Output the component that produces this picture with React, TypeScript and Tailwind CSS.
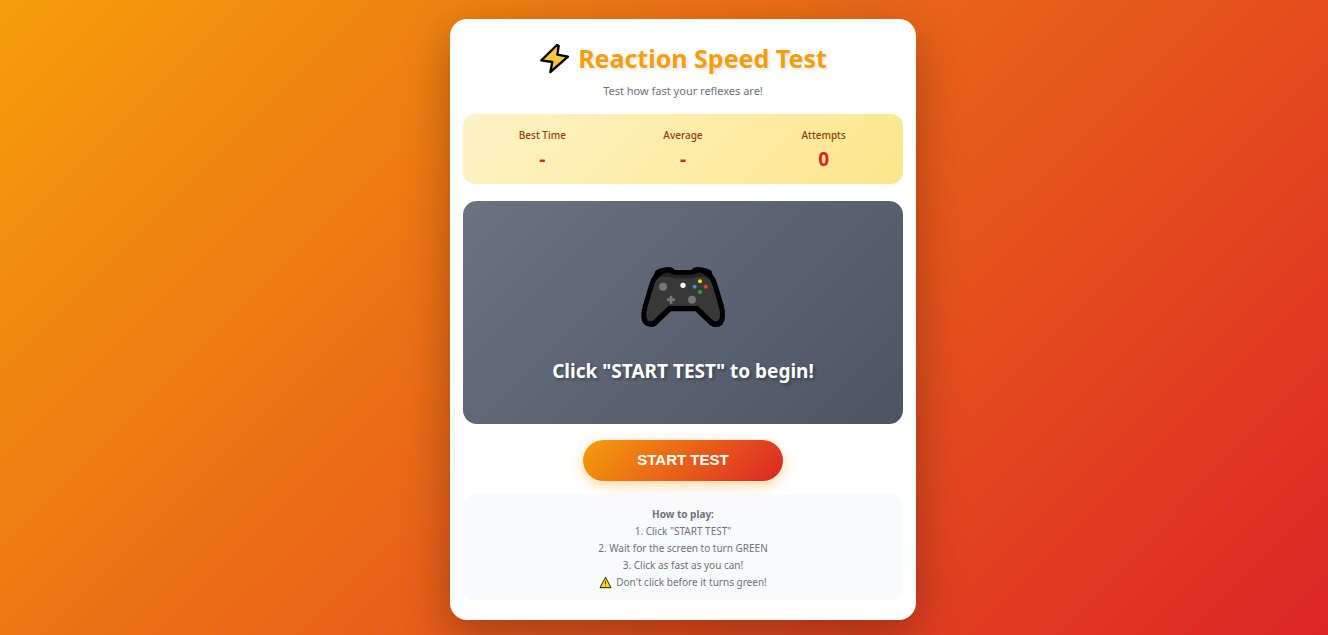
import React, { useEffect, useRef, useState } from "react";

type Phase = "idle" | "waiting" | "ready" | "done" | "early";

function BoltIcon() {
  return (
    <svg viewBox="0 0 93 93" className="h-[31px] w-[31px] shrink-0" aria-hidden="true">
      <path
        d="M54 6 L7 52 L40 57 L34 87 L87 41 L55 35 L59 9 Z"
        fill="#fcc63c"
        stroke="#000"
        strokeWidth="7"
        strokeLinejoin="round"
      />
    </svg>
  );
}

function GamepadIcon() {
  return (
    <svg viewBox="30 30 258 192" className="h-16 w-[86px]" aria-hidden="true">
      <path
        d="M76 47 Q95 36 118 36 Q128 36 135 45 L184 45 Q190 36 202 36 Q224 36 244 47 L247 57 Q257 69 263 90 L281 150 Q286 169 285 186 Q283 216 257 216 Q244 216 235 206 L196 169 L123 169 L84 206 Q75 216 62 216 Q35 214 34 186 Q33 169 39 150 L57 90 Q63 69 73 57 Z"
        fill="#000"
      />
      <path
        d="M88 65 Q100 52 118 52 L130 58 L188 58 L202 52 Q220 52 232 65 Q244 72 250 94 L267 152 Q274 172 271 188 Q267 200 257 201 Q251 201 246 195 L203 154 L116 154 L73 195 Q68 201 62 201 Q51 200 48 188 Q45 172 52 152 L69 94 Q75 72 88 65 Z"
        fill="#383838"
        stroke="#000"
        strokeWidth="3"
      />
      <path
        d="M89 66 Q100 54 118 54 L130 60 L188 60 L202 54 Q219 54 231 66 L202 66 L188 70 L130 70 L118 66 Z"
        fill="#242424"
      />
      <circle cx="99" cy="95" r="12" fill="#767676" />
      <circle cx="186" cy="134" r="12" fill="#767676" />
      <path d="M119 122h8v8h8v8h-8v8h-8v-8h-8v-8h8z" fill="#767676" />
      <circle cx="159" cy="91" r="8" fill="#fff" />
      <circle cx="210" cy="79" r="6" fill="#fde300" />
      <circle cx="194" cy="95" r="6" fill="#3a96dd" />
      <circle cx="227" cy="95" r="6" fill="#e74228" />
      <circle cx="210" cy="111" r="6" fill="#16b616" />
    </svg>
  );
}

function WarningIcon() {
  return (
    <svg viewBox="0 0 39 39" className="h-[13px] w-[13px] shrink-0" aria-hidden="true">
      <path d="M19.5 4 L36 35 H3 Z" fill="#fce100" stroke="#222" strokeWidth="3" strokeLinejoin="round" />
      <path d="M19.5 14v11M19.5 28v3" stroke="#000" strokeWidth="2" />
    </svg>
  );
}

function Stat({ label, value }: { label: string; value: string }) {
  return (
    <div className="text-center">
      <dt className="text-[10px] leading-4 font-medium text-[#92400e]">{label}</dt>
      <dd className="mt-1 text-[19px] leading-6 font-bold text-[#dc2626]">{value}</dd>
    </div>
  );
}

const messages: Record<Phase, string> = {
  idle: 'Click "START TEST" to begin!',
  waiting: "Wait for green...",
  ready: "CLICK NOW!",
  done: "Nice! Go again?",
  early: "Too early! Try again.",
};

export default function App() {
  const [phase, setPhase] = useState<Phase>("idle");
  const [times, setTimes] = useState<number[]>([]);
  const timer = useRef<number | undefined>(undefined);
  const startedAt = useRef(0);

  useEffect(() => () => window.clearTimeout(timer.current), []);

  function start() {
    window.clearTimeout(timer.current);
    setPhase("waiting");
    timer.current = window.setTimeout(() => {
      startedAt.current = performance.now();
      setPhase("ready");
    }, 1500 + Math.random() * 3000);
  }

  function react() {
    if (phase === "waiting") {
      window.clearTimeout(timer.current);
      setPhase("early");
    } else if (phase === "ready") {
      const elapsed = Math.round(performance.now() - startedAt.current);
      setTimes((previous) => [...previous, elapsed]);
      setPhase("done");
    }
  }

  const best = times.length ? `${Math.min(...times)}ms` : "-";
  const average = times.length
    ? `${Math.round(times.reduce((sum, time) => sum + time, 0) / times.length)}ms`
    : "-";

  return (
    <div className="flex min-h-screen items-start justify-center bg-[linear-gradient(135deg,#f59e0b,#dc2626)] pt-[19px] pb-[15px] pl-[38px] font-['Noto_Sans','Open_Sans',sans-serif]">
      <main className="w-full max-w-[466px] rounded-[17px] bg-white px-[13px] pt-[19px] pb-5 text-center shadow-[0_16px_48px_rgba(0,0,0,0.3)]">
        <h1 className="flex items-center justify-center gap-2 text-[25px] leading-10 font-bold text-[#f59e0b] [text-shadow:2px_2px_3px_rgba(0,0,0,0.1)]">
          <BoltIcon />
          Reaction Speed Test
        </h1>
        <p className="mt-[5px] text-[11px] leading-4 text-[#6b7280]">Test how fast your reflexes are!</p>

        <dl className="mt-[15px] grid grid-cols-3 gap-2 rounded-xl bg-linear-[135deg,#fef3c7,#fde68a] p-[13px]">
          <Stat label="Best Time" value={best} />
          <Stat label="Average" value={average} />
          <Stat label="Attempts" value={String(times.length)} />
        </dl>

        <button
          type="button"
          onClick={react}
          className={`mt-[17px] flex h-[223px] w-full flex-col items-center justify-center gap-7 rounded-[14px] pt-6 ${
            phase === "ready"
              ? "bg-linear-[135deg,#10b981,#059669]"
              : phase === "waiting" || phase === "early"
                ? "bg-linear-[135deg,#ef4444,#dc2626]"
                : "bg-linear-[135deg,#6b7280,#4b5563]"
          }`}
        >
          <GamepadIcon />
          <span className="text-[19px] leading-7 font-bold text-white [text-shadow:2px_2px_3px_rgba(0,0,0,0.3)]">
            {messages[phase]}
          </span>
        </button>

        <button
          type="button"
          onClick={start}
          className="mt-4 h-[41px] w-[200px] rounded-full bg-linear-[135deg,#f59e0b,#dc2626] font-['Liberation_Sans',Arial,sans-serif] text-[15px] font-bold text-white shadow-[0_4px_13px_rgba(245,158,11,0.4)]"
        >
          START TEST
        </button>

        <section className="mt-[14px] rounded-[10px] bg-[#f9fafb] pt-[11px] pb-[9px] text-[10px] leading-[17px] text-[#6b7280]">
          <h2 className="font-bold">How to play:</h2>
          <ol>
            <li>1. Click "START TEST"</li>
            <li>2. Wait for the screen to turn GREEN</li>
            <li>3. Click as fast as you can!</li>
          </ol>
          <p className="flex items-center justify-center gap-1">
            <WarningIcon />
            Don't click before it turns green!
          </p>
        </section>
      </main>
    </div>
  );
}
